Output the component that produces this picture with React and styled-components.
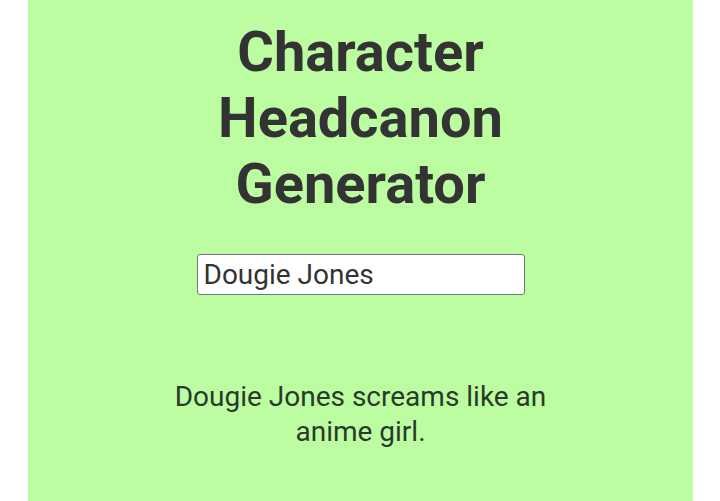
import React, { useState } from "react";
import styled, { createGlobalStyle } from "styled-components";

const GlobalStyle = createGlobalStyle`
  html, body {
    margin: 0;
    padding: 0;
    background: #ffffff;
    font-family: Roboto, "Liberation Sans", sans-serif;
  }
`;

const Page = styled.div`
  display: flex;
  padding: 0 27px 0 28px;
  min-height: 501px;
  box-sizing: border-box;
`;

const Panel = styled.main`
  flex: 1;
  background: #bdfda2;
  display: flex;
  flex-direction: column;
  align-items: center;
  padding-top: 19px;
  min-height: 501px;
  box-sizing: border-box;
`;

const Title = styled.h1`
  margin: 0;
  width: 320px;
  text-align: center;
  font-size: 56px;
  font-weight: 700;
  line-height: normal;
  color: #333333;
`;

const NameInput = styled.input`
  margin-top: 37px;
  width: 328px;
  height: 41px;
  box-sizing: border-box;
  border: 1px solid #767676;
  border-radius: 3px;
  background: #ffffff;
  padding: 0 6px;
  font-family: Roboto, "Liberation Sans", sans-serif;
  font-size: 28px;
  color: #333333;
  outline: none;
`;

const Result = styled.p`
  margin: 84px 0 0;
  max-width: 420px;
  text-align: center;
  font-size: 28px;
  line-height: 35px;
  color: #2a3a2a;
`;

export default function App() {
  const [name, setName] = useState("Dougie Jones");
  return (
    <>
      <GlobalStyle />
      <Page>
        <Panel>
          <Title>Character Headcanon Generator</Title>
          <NameInput value={name} onChange={(e) => setName(e.target.value)} />
          <Result>{name} screams like an anime girl.</Result>
        </Panel>
      </Page>
    </>
  );
}
